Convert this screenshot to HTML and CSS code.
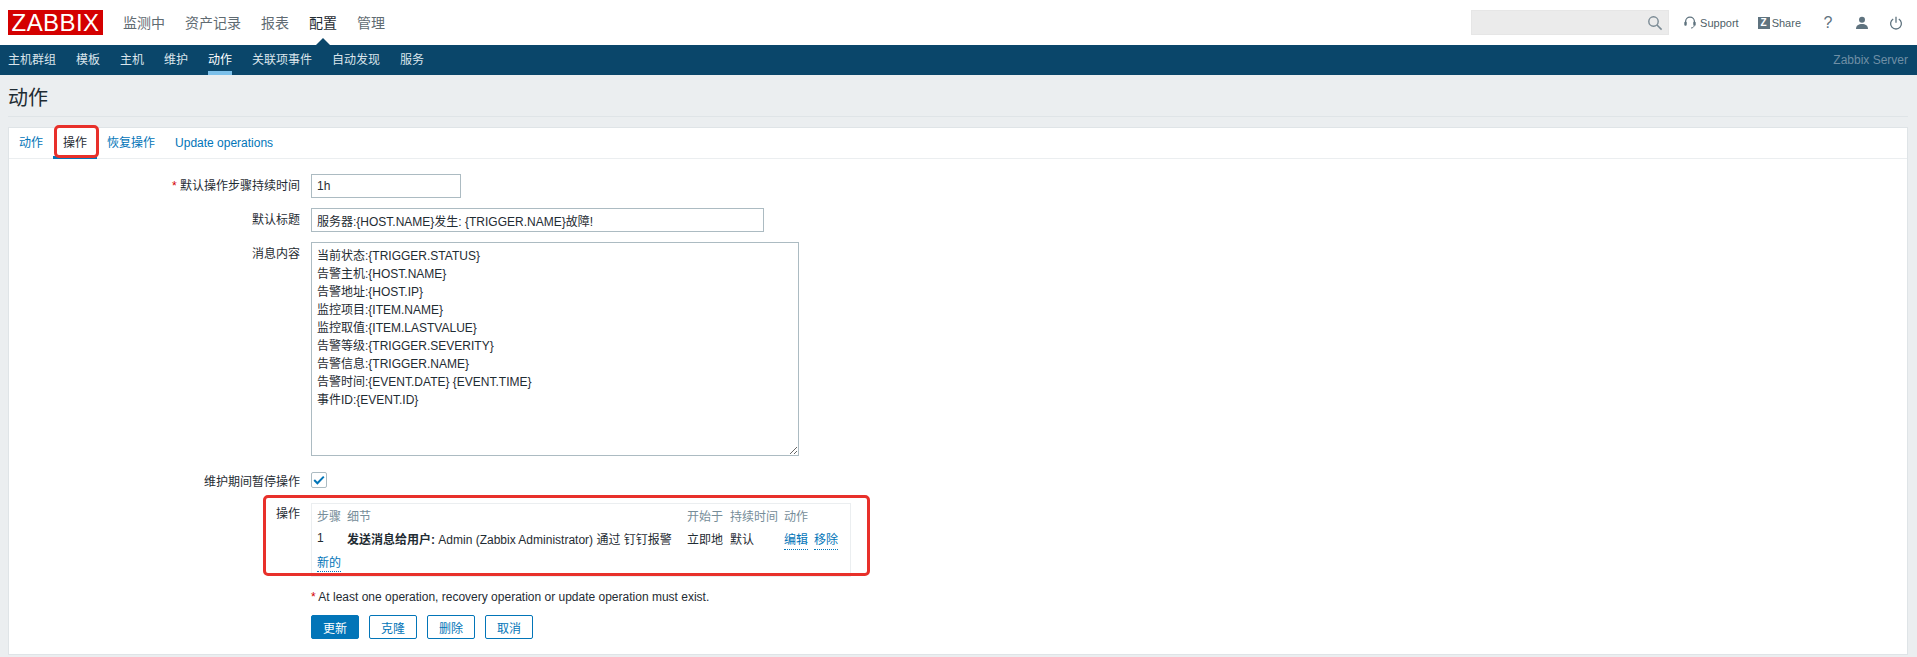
FILE: index.html
```html
<!doctype html>
<html>
<head>
    <meta charset="utf-8">
    <title>动作</title>
    <link rel="stylesheet" href="styles.css">
</head>

<body>

    <header class="top-nav">
        <div class="logo">ZABBIX</div>
        <ul class="main-menu">
            <li>监测中</li>
            <li>资产记录</li>
            <li>报表</li>
            <li class="selected">配置</li>
            <li>管理</li>
        </ul>
        <div class="top-tools">
            <div class="search">
                <svg width="16" height="16" viewBox="0 0 16 16"><circle cx="6.5" cy="6.5" r="4.7" fill="none" stroke="#7a8a94" stroke-width="1.4"/><path d="M10 10l4.6 4.6" stroke="#7a8a94" stroke-width="1.6"/></svg>
            </div>
            <span class="tool support">
                <svg width="12" height="13" viewBox="0 0 12 13"><path d="M1.6 8V5.6a4.4 4.4 0 0 1 8.8 0V8" fill="none" stroke="#5f737f" stroke-width="1.3"/><rect x="0.3" y="5.8" width="2.4" height="4" rx="1" fill="#5f737f"/><rect x="9.3" y="5.8" width="2.4" height="4" rx="1" fill="#5f737f"/><path d="M10 9.6c0 1.6-1.4 2.4-3 2.4" fill="none" stroke="#5f737f"/></svg>
                Support
            </span>
            <span class="tool share"><b class="z-box">Z</b>Share</span>
            <span class="help">?</span>
            <svg class="user-icon" width="14" height="14" viewBox="0 0 14 14"><circle cx="7" cy="3.8" r="3" fill="#5f737f"/><path d="M1 13c0-3.6 2.6-5 6-5s6 1.4 6 5z" fill="#5f737f"/></svg>
            <svg class="power-icon" width="14" height="14" viewBox="0 0 14 14"><path d="M4.2 3a5.4 5.4 0 1 0 5.6 0" fill="none" stroke="#5f737f" stroke-width="1.3"/><path d="M7 0.8v6" stroke="#5f737f" stroke-width="1.3"/></svg>
        </div>
    </header>

    <nav class="sub-nav">
        <ul class="sub-menu">
            <li>主机群组</li>
            <li>模板</li>
            <li>主机</li>
            <li>维护</li>
            <li class="selected">动作</li>
            <li>关联项事件</li>
            <li>自动发现</li>
            <li>服务</li>
        </ul>
        <span class="server-name">Zabbix Server</span>
    </nav>

    <main class="wrapper">
        <div class="page-title"><h1>动作</h1></div>

        <section class="card">
            <ul class="tabs">
                <li>动作</li>
                <li class="selected">操作</li>
                <li>恢复操作</li>
                <li>Update operations</li>
            </ul>

            <form class="form-list">
                <label class="field-label"><em>*</em> 默认操作步骤持续时间</label>
                <input class="field-short" type="text" value="1h">

                <label class="field-label">默认标题</label>
                <input class="field-long" type="text" value="服务器:{HOST.NAME}发生: {TRIGGER.NAME}故障!">

                <label class="field-label">消息内容</label>
                <textarea class="field-message">当前状态:{TRIGGER.STATUS}
告警主机:{HOST.NAME}
告警地址:{HOST.IP}
监控项目:{ITEM.NAME}
监控取值:{ITEM.LASTVALUE}
告警等级:{TRIGGER.SEVERITY}
告警信息:{TRIGGER.NAME}
告警时间:{EVENT.DATE} {EVENT.TIME}
事件ID:{EVENT.ID}</textarea>

                <label class="field-label label-check">维护期间暂停操作</label>
                <span class="checkbox">
                    <svg width="12" height="10" viewBox="0 0 12 10"><path d="M1.2 5l3.2 3.2L10.8 1.6" fill="none" stroke="#0275b8" stroke-width="2"/></svg>
                </span>

                <label class="field-label label-ops">操作</label>
                <div class="ops-box">
                    <table class="ops-table">
                        <thead>
                            <tr>
                                <th class="col-step">步骤</th>
                                <th class="col-detail">细节</th>
                                <th class="col-start">开始于</th>
                                <th class="col-time">持续时间</th>
                                <th>动作</th>
                            </tr>
                        </thead>
                        <tbody>
                            <tr>
                                <td>1</td>
                                <td><strong>发送消息给用户:</strong> Admin (Zabbix Administrator) 通过 钉钉报警</td>
                                <td>立即地</td>
                                <td>默认</td>
                                <td><a class="link">编辑</a><a class="link link-next">移除</a></td>
                            </tr>
                        </tbody>
                    </table>
                    <a class="link link-new">新的</a>
                </div>

                <span></span>
                <p class="note"><em>*</em> At least one operation, recovery operation or update operation must exist.</p>

                <span></span>
                <div class="buttons">
                    <button class="btn btn-main" type="button">更新</button>
                    <button class="btn" type="button">克隆</button>
                    <button class="btn" type="button">删除</button>
                    <button class="btn" type="button">取消</button>
                </div>
            </form>
        </section>
    </main>

    <!-- red marks drawn over the screenshot -->
    <div class="mark mark-tab"></div>
    <div class="mark mark-ops"></div>

</body>
</html>
```

FILE: styles.css
```css
* {
    box-sizing: border-box;
}
html, body {
    height: 100%;
}
body {
    margin: 0;
    background-color: #ebeef0;
    color: #1f2c33;
    font-family: "Liberation Sans", "Noto Sans CJK SC", sans-serif;
    font-size: 12px;
    overflow: hidden;
    position: relative;
}
ul {
    list-style: none;
    margin: 0;
    padding: 0;
}

/* top bar */
.top-nav {
    height: 45px;
    background-color: #fff;
    display: flex;
    align-items: center;
    padding: 0 0 0 8px;
}
.logo {
    width: 95px;
    height: 25px;
    background-color: #d40000;
    color: #fff;
    font-size: 24px;
    line-height: 25px;
    text-align: center;
    letter-spacing: 0.4px;
}
.main-menu {
    display: flex;
    gap: 20px;
    margin-left: 20px;
    font-size: 14px;
    color: #5f6b72;
}
.main-menu li {
    height: 45px;
    line-height: 47px;
    position: relative;
}
.main-menu .selected {
    color: #1f2c33;
}
.main-menu .selected:after {
    content: "";
    position: absolute;
    left: 7px;
    bottom: 0;
    border-left: 7px solid transparent;
    border-right: 7px solid transparent;
    border-bottom: 7px solid #0a466a;
}
.top-tools {
    margin-left: auto;
    display: flex;
    align-items: center;
    color: #5f737f;
}
.search {
    width: 198px;
    height: 25px;
    background-color: #ebebeb;
    border: 1px solid #e6e6e6;
    display: flex;
    align-items: center;
    justify-content: flex-end;
    padding-right: 5px;
}
.tool {
    display: flex;
    align-items: center;
    color: #4f5f68;
    font-size: 11px;
}
.support {
    margin-left: 15px;
    gap: 4px;
}
.share {
    margin-left: 19px;
    gap: 2px;
}
.z-box {
    width: 12px;
    height: 12px;
    background-color: #5f737f;
    color: #fff;
    font-size: 10px;
    line-height: 12px;
    text-align: center;
}
.help {
    margin-left: 20px;
    width: 14px;
    text-align: center;
    font-size: 16px;
    color: #5f737f;
}
.user-icon {
    margin-left: 20px;
}
.power-icon {
    margin-left: 20px;
    margin-right: 14px;
}

/* second bar */
.sub-nav {
    height: 30px;
    background-color: #0a466a;
    display: flex;
    justify-content: space-between;
    padding: 0 9px 0 8px;
}
.sub-menu {
    display: flex;
    gap: 20px;
    color: #dbe5ec;
}
.sub-menu li {
    line-height: 30px;
    height: 30px;
}
.sub-menu .selected {
    color: #fff;
    border-bottom: 4px solid #7cc0ea;
}
.server-name {
    line-height: 30px;
    color: #6f8fa5;
}

/* page */
.wrapper {
    padding: 0 9px 0 8px;
}
.page-title {
    height: 42px;
    border-bottom: 1px solid #dfe4e7;
    margin-bottom: 10px;
}
h1 {
    margin: 0;
    font-size: 20px;
    font-weight: normal;
    line-height: 47px;
}
.card {
    height: 528px;
    background-color: #fff;
    border: 1px solid #dfe4e7;
}
.tabs {
    display: flex;
    height: 31px;
    border-bottom: 1px solid #ebeef0;
    color: #0275b8;
}
.tabs li {
    padding: 0 10px;
    line-height: 31px;
    height: 31px;
}
.tabs .selected {
    color: #1f2c33;
    border-bottom: 3px solid #0275b8;
}

/* form */
.form-list {
    display: grid;
    grid-template-columns: 291px auto;
    column-gap: 11px;
    row-gap: 10px;
    justify-items: start;
    padding-top: 15px;
}
.field-label {
    justify-self: end;
    line-height: 24px;
    color: #1f2c33;
}
em {
    color: #d40000;
    font-style: normal;
}
input, textarea {
    border: 1px solid #acbbc2;
    font-family: inherit;
    font-size: 12px;
    color: #1f2c33;
    padding: 0 5px;
    margin: 0;
    display: block;
    background-color: #fff;
}
.field-short {
    width: 150px;
    height: 24px;
}
.field-long {
    width: 453px;
    height: 24px;
}
.field-message {
    width: 488px;
    height: 214px;
    padding: 4px 5px;
    line-height: 18px;
    resize: both;
}
.label-check {
    margin-top: 4px;
}
.checkbox {
    width: 16px;
    height: 16px;
    margin-top: 6px;
    margin-bottom: 5px;
    border: 1px solid #acbbc2;
    border-radius: 2px;
    display: flex;
    align-items: center;
    justify-content: center;
}
.label-ops {
    line-height: 22px;
    margin-top: -1px;
}
.ops-box {
    width: 540px;
    height: 74px;
    margin-top: -1px;
    border: 1px solid #ebeef0;
    padding: 0 5px;
}
.ops-table {
    border-collapse: collapse;
    table-layout: fixed;
    width: 528px;
}
.ops-table th {
    font-weight: normal;
    text-align: left;
    color: #768d99;
    padding: 0;
    height: 22px;
}
.ops-table td {
    padding: 0;
    height: 24px;
    white-space: nowrap;
}
.col-step {
    width: 30px;
}
.col-detail {
    width: 340px;
}
.col-start {
    width: 43px;
}
.col-time {
    width: 54px;
}
.ops-table strong {
    font-weight: bold;
}
.link {
    color: #0275b8;
    border-bottom: 1px dotted #0275b8;
    padding-bottom: 2px;
}
.link-next {
    margin-left: 6px;
}
.link-new {
    display: inline-block;
    line-height: 15px;
    margin-top: 6px;
    padding-bottom: 0;
}
.note {
    margin: 2px 0 0;
    line-height: 16px;
    color: #1f2c33;
}
.buttons {
    display: flex;
    gap: 10px;
}
.btn {
    width: 48px;
    height: 24px;
    padding: 0;
    border: 1px solid #0275b8;
    border-radius: 2px;
    background-color: #fff;
    color: #0275b8;
    font-family: inherit;
    font-size: 12px;
}
.btn-main {
    background-color: #0275b8;
    color: #fff;
}

/* red annotation boxes */
.mark {
    position: absolute;
    border: 3px solid #e8302a;
    border-radius: 5px;
}
.mark-tab {
    left: 54px;
    top: 125px;
    width: 45px;
    height: 33px;
}
.mark-ops {
    left: 263px;
    top: 495px;
    width: 607px;
    height: 81px;
}
```
